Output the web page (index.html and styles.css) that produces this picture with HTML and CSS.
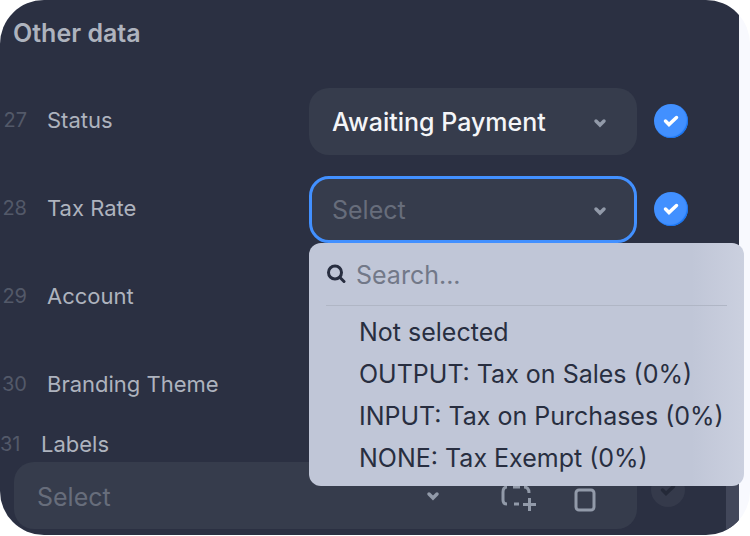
FILE: index.html
```html
<!DOCTYPE html>
<html lang="en">
    <head>
        <meta charset="utf-8">
        <title>Other data</title>
        <link rel="stylesheet" href="styles.css">
    </head>
    <body>
        <!-- Shared icons -->
        <svg class="sprite" aria-hidden="true">
            <symbol id="chevron" viewBox="0 0 14 10">
                <path d="M3 3l4 4 4-4" fill="none" stroke="currentColor" stroke-width="3.5" stroke-linecap="round"/>
            </symbol>
            <symbol id="check" viewBox="0 0 16 12">
                <path d="M2.5 6l3.500 3.500 7.500-7" fill="none" stroke="currentColor" stroke-width="3.5" stroke-linecap="round"/>
            </symbol>
        </svg>
        <main class="card">
            <form class="panel">
                <h1 class="title">Other data</h1>
                <div class="row">
                    <span class="number">27</span>
                    <label class="label" for="status">Status</label>
                    <div class="field">
                        <select class="select filled" id="status"><option>Awaiting Payment</option></select>
                        <svg class="chevron"><use href="#chevron"/></svg>
                    </div>
                    <button class="confirm" type="button" aria-label="Confirm status"><svg><use href="#check"/></svg></button>
                </div>
                <div class="row">
                    <span class="number">28</span>
                    <label class="label" for="tax">Tax Rate</label>
                    <div class="field">
                        <select class="select active" id="tax"><option>Select</option></select>
                        <svg class="chevron"><use href="#chevron"/></svg>
                        <div class="menu">
                            <div class="search">
                                <svg class="search-icon" viewBox="0 0 20 20" aria-hidden="true">
                                    <circle cx="9" cy="8.500" r="6.500" fill="none" stroke="currentColor" stroke-width="3"/>
                                    <path d="M14 13.500l4 4" stroke="currentColor" stroke-width="3" stroke-linecap="round"/>
                                </svg>
                                <input class="search-input" type="text" placeholder="Search..." aria-label="Search">
                            </div>
                            <div class="options">
                                <button class="option" type="button">Not selected</button>
                                <button class="option" type="button">OUTPUT: Tax on Sales (0%)</button>
                                <button class="option" type="button">INPUT: Tax on Purchases (0%)</button>
                                <button class="option" type="button">NONE: Tax Exempt (0%)</button>
                            </div>
                        </div>
                    </div>
                    <button class="confirm" type="button" aria-label="Confirm tax rate"><svg><use href="#check"/></svg></button>
                </div>
                <div class="row">
                    <span class="number">29</span>
                    <span class="label">Account</span>
                </div>
                <div class="row">
                    <span class="number">30</span>
                    <span class="label">Branding Theme</span>
                </div>
                <div class="labels-head">
                    <span class="number">31</span>
                    <label for="labels">Labels</label>
                </div>
                <div class="labels-row">
                    <div class="labels-field">
                        <select class="labels-select" id="labels"><option>Select</option></select>
                        <svg class="labels-chevron"><use href="#chevron"/></svg>
                        <button class="tool" type="button" aria-label="Add area">
                            <svg width="38" height="34" viewBox="0 0 38 34" fill="none" stroke="currentColor" stroke-width="3">
                                <path d="M8 8q-4 0-4 5v8q0 4 4 4M14 8h7M25 8q5 0 5 6M15 25h5M24 25.500h13M30.500 19v13"/>
                            </svg>
                        </button>
                        <button class="tool" type="button" aria-label="Single area">
                            <svg width="22" height="24" viewBox="0 0 22 24" fill="none" stroke="currentColor" stroke-width="3">
                                <rect x="2" y="2" width="18" height="20" rx="3"/>
                            </svg>
                        </button>
                    </div>
                    <button class="confirm off" type="button" aria-label="Confirm labels"><svg><use href="#check"/></svg></button>
                </div>
                <div class="scrollbar"></div>
            </form>
        </main>
    </body>
</html>
```
FILE: styles.css
```css
* {
    box-sizing: border-box;
}

body {
    margin: 0;
    background-color: white;
    font-family: Inter, "Liberation Sans", sans-serif;
    font-size: 22px;
    color: #aeb3be;
}

button, select, input {
    margin: 0;
    padding: 0;
    border: none;
    background: none;
    font: inherit;
    color: inherit;
}

.sprite {
    display: none;
}

.card {
    padding-right: 11px;
    border-radius: 44px;
    background-color: #f8f9fe;
    overflow: hidden;
}

.panel {
    position: relative;
    padding-bottom: 6px;
    background-color: #2b3042;
}

.title {
    margin: 0;
    padding: 18px 13px 29px;
    font-size: 25px;
    font-weight: 600;
    line-height: 30px;
}

.row {
    display: grid;
    grid-template-columns: 27px 248fr 328fr 34px;
    column-gap: 17px;
    align-items: center;
    height: 88px;
    padding-right: 51px;
}

.number {
    padding-bottom: 2px;
    color: #535969;
    font-size: 20px;
    text-align: right;
}

.label {
    padding-bottom: 2px;
    padding-left: 3px;
}

.field {
    position: relative;
}

.select {
    display: block;
    width: 100%;
    height: 67px;
    padding: 2px 60px 0 23px;
    border-radius: 20px;
    background-color: #363c4c;
    color: #676d7b;
    font-size: 25px;
    appearance: none;
}

.filled {
    color: #f4f5f8;
    font-weight: 500;
}

.active {
    padding-left: 20px;
    border: 3px solid #4290ff;
}

.chevron {
    position: absolute;
    top: 30px;
    right: 30px;
    width: 14px;
    height: 10px;
    color: #929aa9;
}

.confirm {
    display: flex;
    align-items: center;
    justify-content: center;
    width: 34px;
    height: 34px;
    border-radius: 50%;
    background-color: #4290ff;
    box-shadow: inset -1px -1px 1px #1672ef;
    color: white;
}

.confirm svg {
    width: 16px;
    height: 12px;
}

.menu {
    position: absolute;
    z-index: 2;
    top: 100%;
    left: 0;
    width: 435px;
    padding-bottom: 7px;
    border-radius: 12px;
    background: linear-gradient(to right, #c0c6d7 88%, #cbd0df);
    color: #282e40;
}

.search {
    display: flex;
    align-items: center;
    gap: 10px;
    height: 63px;
    margin: 0 17px;
    border-bottom: 1px solid #b0b6c5;
}

.search-icon {
    width: 20px;
    height: 20px;
}

.search-input {
    flex: 1;
    min-width: 0;
    padding-top: 2px;
    font-size: 25px;
}

.search-input::placeholder {
    color: #727888;
}

.options {
    padding-top: 5px;
}

.option {
    display: block;
    width: 100%;
    height: 42px;
    padding-left: 50px;
    font-size: 25px;
    text-align: left;
    white-space: nowrap;
}

.labels-head {
    display: grid;
    grid-template-columns: 20px 1fr;
    column-gap: 21px;
    height: 33px;
    line-height: 30px;
}

.labels-row {
    display: flex;
    gap: 14px;
    padding: 0 54px 0 14px;
}

.labels-field {
    display: flex;
    flex: 1;
    align-items: center;
    height: 67px;
    padding-right: 41px;
    border-radius: 20px;
    background-color: #363c4c;
    color: #929aa9;
}

.labels-select {
    flex: 1;
    height: 67px;
    padding: 2px 0 0 23px;
    color: #676d7b;
    font-size: 25px;
    appearance: none;
}

.labels-chevron {
    width: 14px;
    height: 10px;
    margin-right: 59px;
}

.tool {
    display: flex;
}

.tool + .tool {
    margin-top: 8px;
    margin-left: 37px;
}

.off {
    margin-top: 11px;
    background-color: #353a4b;
    box-shadow: none;
    color: #242938;
}

.scrollbar {
    position: absolute;
    right: 0;
    bottom: 0;
    width: 13px;
    height: 80px;
    background-color: #42475a;
}
```
